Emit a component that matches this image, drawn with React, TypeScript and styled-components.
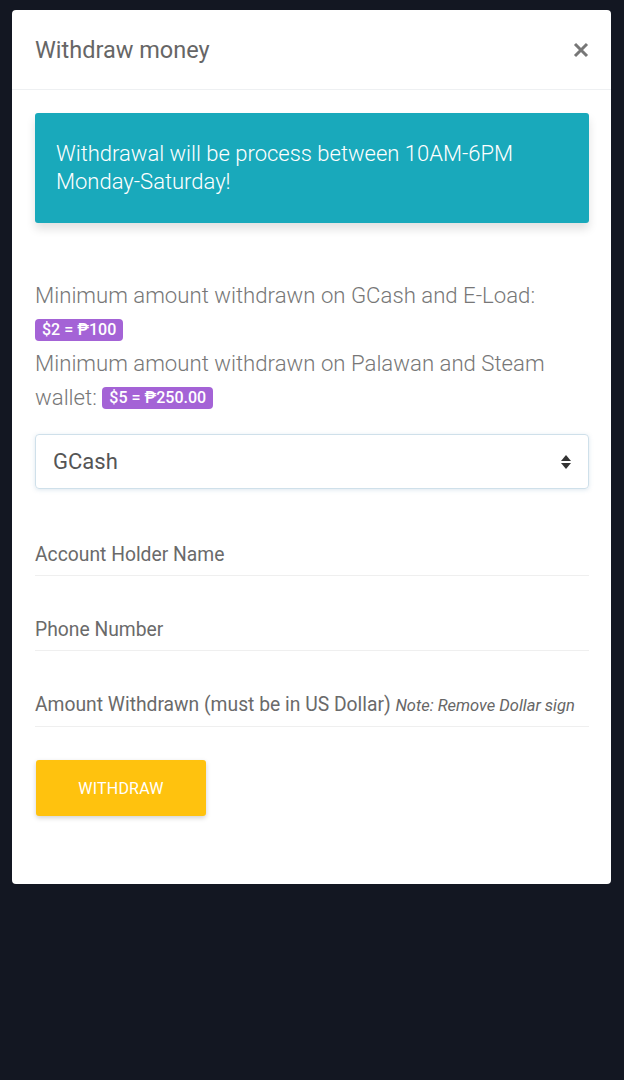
import React from "react";
import styled, { createGlobalStyle } from "styled-components";

const Global = createGlobalStyle`
  html, body { margin: 0; padding: 0; background: #131722; }
  body { font-family: Roboto, "Liberation Sans", Arial, sans-serif; }
  * { box-sizing: border-box; }
`;

const Page = styled.div`
  min-height: 1080px;
  background: #131722;
  padding: 10px 13px 0 12px;
`;

const Modal = styled.div`
  width: 599px;
  background: #fff;
  border-radius: 4px;
  overflow: hidden;
`;

const Header = styled.div`
  height: 80px;
  display: flex;
  align-items: center;
  justify-content: space-between;
  padding: 0 22px 0 23px;
  border-bottom: 1px solid #eef0f2;
`;

const Title = styled.h2`
  margin: 0;
  font-size: 23.5px;
  font-weight: 400;
  color: #666;
`;

const Close = styled.button`
  border: 0;
  background: transparent;
  padding: 0;
  width: 16px;
  height: 16px;
  display: flex;
  cursor: pointer;
`;

const Body = styled.div`
  padding: 23px 22px 68px 23px;
`;

const Alert = styled.div`
  background: #19a9bb;
  color: #fff;
  border-radius: 3px;
  padding: 27px 21px;
  font-size: 22px;
  font-weight: 300;
  line-height: 28px;
  box-shadow: 0 6px 10px rgba(0, 0, 0, 0.12);
`;

const Info = styled.p`
  margin: 55px 0 0;
  font-size: 22.2px;
  font-weight: 300;
  line-height: 34px;
  color: #777;
`;

const Badge = styled.span`
  display: inline-block;
  background: #a463d6;
  color: #fff;
  font-size: 16px;
  font-weight: 500;
  line-height: 22px;
  padding: 0 7px;
  border-radius: 4px;
  vertical-align: 2px;
`;

const SelectBox = styled.div`
  margin-top: 20px;
  height: 55px;
  border: 1px solid #cfe0ea;
  border-radius: 4px;
  box-shadow: 0 1px 4px rgba(120, 160, 190, 0.25);
  display: flex;
  align-items: center;
  justify-content: space-between;
  padding: 0 17px 0 17px;
  font-size: 22px;
  color: #555;
`;

const Field = styled.div<{ $first?: boolean }>`
  margin-top: ${(p) => (p.$first ? 12 : 0)}px;
  padding: 44px 0 10px;
  border-bottom: 1px solid #efefef;
  font-size: 19.3px;
  line-height: 20px;
  color: #6a6a6a;
`;

const Note = styled.em`
  font-size: 16.5px;
  color: #666;
`;

const Button = styled.button`
  margin-top: 33px;
  margin-left: 1px;
  width: 170px;
  height: 56px;
  border: 0;
  border-radius: 3px;
  background: #ffc20e;
  color: #fff;
  font-family: Roboto, "Liberation Sans", Arial, sans-serif;
  font-size: 16px;
  font-weight: 400;
  letter-spacing: 0.2px;
  box-shadow: 0 2px 5px rgba(0, 0, 0, 0.18);
  cursor: pointer;
`;

export default function App() {
  return (
    <>
      <Global />
      <Page>
        <Modal>
          <Header>
            <Title>Withdraw money</Title>
            <Close aria-label="close">
              <svg width="16" height="16" viewBox="0 0 16 16">
                <path d="M2 2 L14 14 M14 2 L2 14" stroke="#777" strokeWidth="3" strokeLinecap="butt" />
              </svg>
            </Close>
          </Header>
          <Body>
            <Alert>
              Withdrawal will be process between 10AM-6PM
              <br />
              Monday-Saturday!
            </Alert>
            <Info>
              Minimum amount withdrawn on GCash and E-Load: <Badge>$2 = ₱100</Badge>
              <br />
              Minimum amount withdrawn on Palawan and Steam wallet: <Badge>$5 = ₱250.00</Badge>
            </Info>
            <SelectBox>
              <span>GCash</span>
              <svg width="10" height="16" viewBox="0 0 10 16">
                <path d="M5 1 L10 7 L0 7 Z" fill="#333" />
                <path d="M0 9 L10 9 L5 15 Z" fill="#333" />
              </svg>
            </SelectBox>
            <Field $first>Account Holder Name</Field>
            <Field>Phone Number</Field>
            <Field>
              Amount Withdrawn (must be in US Dollar) <Note>Note: Remove Dollar sign</Note>
            </Field>
            <Button>WITHDRAW</Button>
          </Body>
        </Modal>
      </Page>
    </>
  );
}
